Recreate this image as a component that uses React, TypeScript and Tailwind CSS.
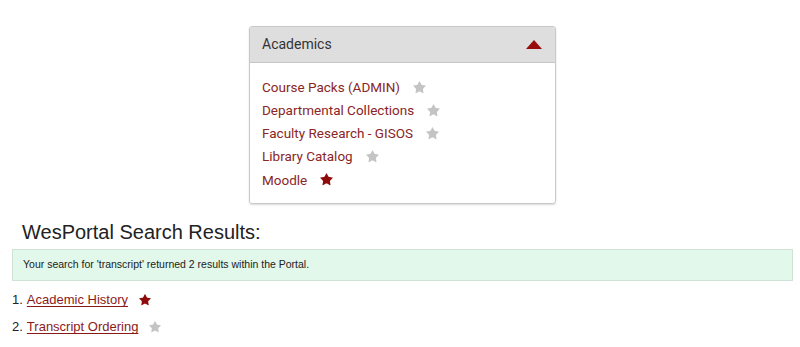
import { Star } from "lucide-react";

const links = [
  { label: "Course Packs (ADMIN)", fav: false },
  { label: "Departmental Collections", fav: false },
  { label: "Faculty Research - GISOS", fav: false },
  { label: "Library Catalog", fav: false },
  { label: "Moodle", fav: true },
];

const results = [
  { label: "Academic History", fav: true },
  { label: "Transcript Ordering", fav: false },
];

function FavStar({ on, size = 13 }: { on: boolean; size?: number }) {
  return (
    <Star
      size={size}
      strokeWidth={0}
      className={on ? "fill-[#8f0a0a]" : "fill-[#c4c4c4]"}
    />
  );
}

export default function App() {
  return (
    <div className="w-[800px] h-[347px] bg-white overflow-hidden font-['Liberation_Sans',Arial,sans-serif]">
      {/* Academics panel */}
      <div className="pt-[26px]">
        <div className="ml-[249px] w-[307px] h-[178px] rounded-[3px] border border-[#c9c9c9] shadow-[0_1px_2px_rgba(0,0,0,0.15)] overflow-hidden font-['Roboto',sans-serif]">
          <div className="h-[36px] bg-[#dedede] border-b border-[#c6c6c6] flex items-center justify-between pl-[12px] pr-[13px]">
            <span className="text-[14px] text-[#333]">Academics</span>
            <svg width="16" height="9" viewBox="0 0 16 9">
              <path d="M8 0 L16 9 L0 9 Z" fill="#9a0c0c" />
            </svg>
          </div>
          <ul className="pt-[15px] pl-[12px] flex flex-col gap-[5.2px]">
            {links.map((l) => (
              <li key={l.label} className="flex items-center gap-[12px] h-[18px]">
                <span className="text-[13.5px] text-[#8a2626]">{l.label}</span>
                <FavStar on={l.fav} size={15} />
              </li>
            ))}
          </ul>
        </div>
      </div>

      {/* Search results */}
      <h1 className="mt-[16px] ml-[22px] text-[20px] leading-[24px] text-[#222]">
        WesPortal Search Results:
      </h1>
      <div className="mt-[5px] mx-[12px] w-[781px] h-[32px] bg-[#e1f8ea] border border-[#cfe2d6] flex items-center pl-[10px]">
        <span className="text-[10.5px] text-[#222]">
          Your search for 'transcript' returned 2 results within the Portal.
        </span>
      </div>
      <ol className="mt-[10px] ml-[12px] flex flex-col gap-[9px]">
        {results.map((r, i) => (
          <li key={r.label} className="flex items-center h-[18px] text-[13px] text-[#222]">
            <span className="mr-[4px]">{i + 1}.</span>
            <a href="#" className="text-[#8a1a1a] underline underline-offset-2">
              {r.label}
            </a>
            <span className="ml-[10px] flex">
              <FavStar on={r.fav} size={14} />
            </span>
          </li>
        ))}
      </ol>
    </div>
  );
}
